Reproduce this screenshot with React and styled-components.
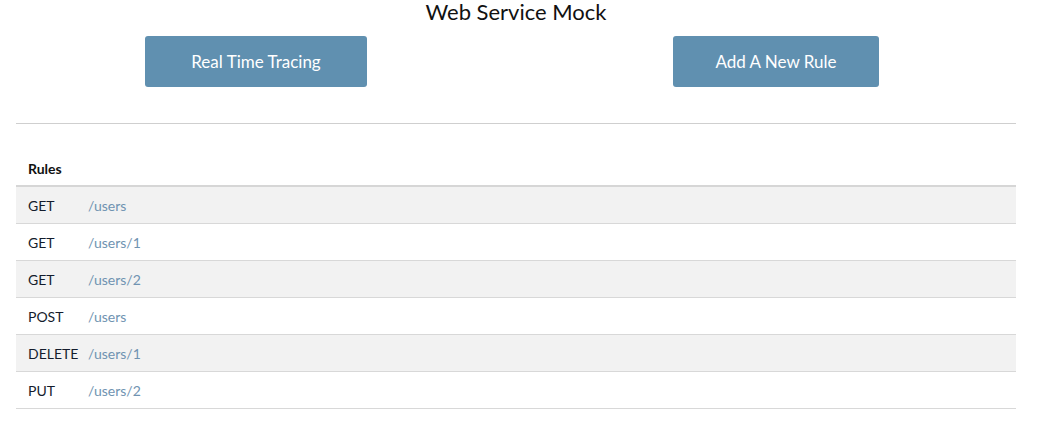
import React from "react";
import styled, { createGlobalStyle } from "styled-components";

const Global = createGlobalStyle`
  html, body { margin: 0; padding: 0; background: #fff; }
  body { font-family: Lato, "Open Sans", sans-serif; color: #1f2430; }
`;

const Page = styled.div`
  width: 1000px;
  margin-left: 16px;
`;

const Title = styled.h1`
  margin: 0;
  height: 24px;
  font-size: 22px;
  font-weight: 400;
  line-height: 24px;
  text-align: center;
  color: #111;
`;

const Actions = styled.div`
  display: flex;
  justify-content: center;
  margin-top: 12px;
`;

const ActionCell = styled.div`
  flex: 0 0 520px;
  display: flex;
  justify-content: center;
`;

const Button = styled.button`
  height: 51px;
  padding: 0 ${(p) => p.$pad}px;
  border: none;
  border-radius: 3px;
  background: #6090b0;
  color: #fff;
  font-family: inherit;
  font-size: 17px;
  cursor: pointer;
`;

const Divider = styled.hr`
  margin: 36px 0 0;
  border: none;
  border-top: 1px solid #cfcfcf;
`;

const Table = styled.table`
  width: 100%;
  margin-top: 26px;
  border-collapse: collapse;
  font-size: 14px;
`;

const HeadCell = styled.th`
  text-align: left;
  font-weight: 700;
  padding: 0 12px 8px;
  height: 27px;
  vertical-align: bottom;
  border-bottom: 2px solid #d6d6d6;
  color: #111;
`;

const Row = styled.tr`
  background: ${(p) => (p.$striped ? "#f2f2f2" : "#fff")};
  border-bottom: 1px solid #d8d8d8;
`;

const MethodCell = styled.td`
  height: 36px;
  width: 60px;
  padding: 0 0 0 12px;
  color: #141c2c;
  white-space: nowrap;
`;

const PathCell = styled.td`
  padding: 0;
  color: #6f93b1;
`;

const rules = [
  ["GET", "/users"],
  ["GET", "/users/1"],
  ["GET", "/users/2"],
  ["POST", "/users"],
  ["DELETE", "/users/1"],
  ["PUT", "/users/2"],
];

export default function App() {
  return (
    <>
      <Global />
      <Page>
        <Title>Web Service Mock</Title>
        <Actions>
          <ActionCell>
            <Button $pad={46}>Real Time Tracing</Button>
          </ActionCell>
          <ActionCell>
            <Button $pad={42}>Add A New Rule</Button>
          </ActionCell>
        </Actions>
        <Divider />
        <Table>
          <thead>
            <tr>
              <HeadCell colSpan={2}>Rules</HeadCell>
            </tr>
          </thead>
          <tbody>
            {rules.map(([m, p], i) => (
              <Row key={i} $striped={i % 2 === 0}>
                <MethodCell>{m}</MethodCell>
                <PathCell>{p}</PathCell>
              </Row>
            ))}
          </tbody>
        </Table>
      </Page>
    </>
  );
}
